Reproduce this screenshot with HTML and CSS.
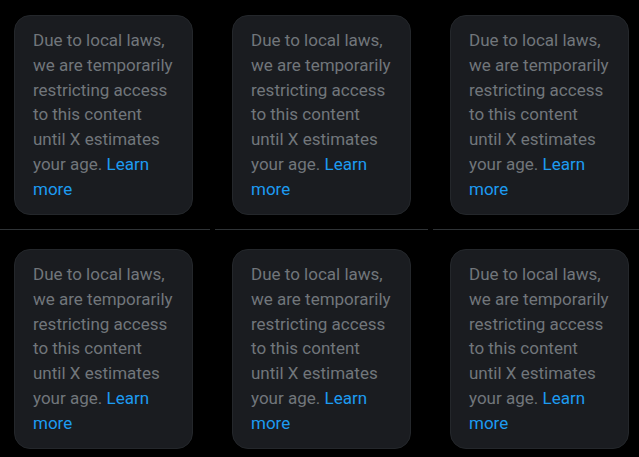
FILE: index.html
```html
<!DOCTYPE html>
<html>
<head>
<meta charset="utf-8">
<link rel="stylesheet" href="styles.css">
</head>
<body>
<div class="grid">
  <div class="cell"><div class="card">Due to local laws, we are temporarily restricting access to this content until X estimates your age. <a class="link" href="#">Learn more</a></div></div>
  <div class="cell"><div class="card">Due to local laws, we are temporarily restricting access to this content until X estimates your age. <a class="link" href="#">Learn more</a></div></div>
  <div class="cell"><div class="card">Due to local laws, we are temporarily restricting access to this content until X estimates your age. <a class="link" href="#">Learn more</a></div></div>
  <div class="cell"><div class="card">Due to local laws, we are temporarily restricting access to this content until X estimates your age. <a class="link" href="#">Learn more</a></div></div>
  <div class="cell"><div class="card">Due to local laws, we are temporarily restricting access to this content until X estimates your age. <a class="link" href="#">Learn more</a></div></div>
  <div class="cell"><div class="card">Due to local laws, we are temporarily restricting access to this content until X estimates your age. <a class="link" href="#">Learn more</a></div></div>
</div>
</body>
</html>
```
FILE: styles.css
```css
html, body {
  margin: 0;
  padding: 0;
  background: #000;
  overflow: hidden;
}
.grid {
  display: grid;
  grid-template-columns: repeat(3, 213px);
  column-gap: 5px;
  row-gap: 4px;
  margin-left: -3px;
}
.cell {
  padding: 15px 0 14px;
  border-bottom: 1px solid #2f3336;
  display: flex;
  justify-content: center;
}
.card {
  box-sizing: border-box;
  width: 179px;
  height: 200px;
  padding: 12px 14px 12px 18px;
  background: #1a1c20;
  border: 1px solid #24272b;
  border-radius: 16px;
  color: #71767b;
  font-family: Roboto, "Liberation Sans", sans-serif;
  font-size: 17px;
  line-height: 24.8px;
}
.link {
  color: #1d9bf0;
  text-decoration: none;
}
```
